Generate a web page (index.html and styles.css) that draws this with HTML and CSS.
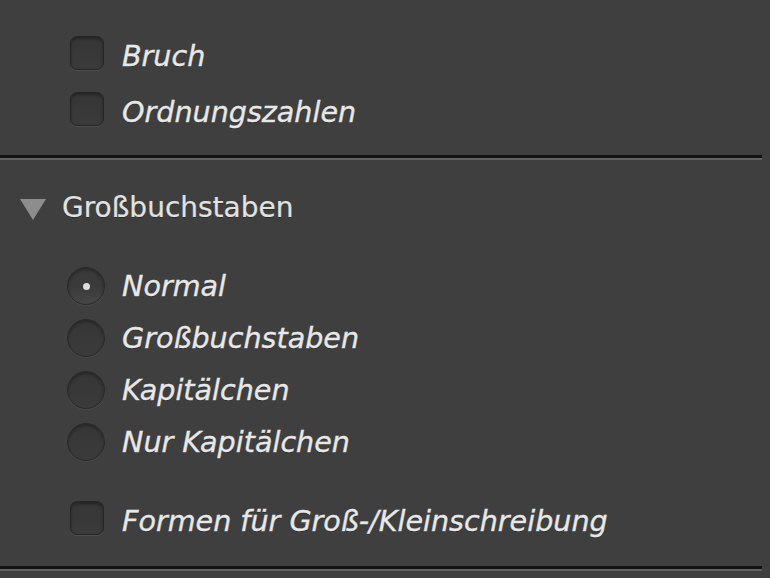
FILE: index.html
```html
<!DOCTYPE html>
<html lang="de">
<head>
<meta charset="utf-8">
<title>Großbuchstaben</title>
<link rel="stylesheet" href="styles.css">
</head>
<body>
<div class="panel">
  <div class="group group-top">
    <label class="row check-row"><span class="checkbox"></span><span class="label">Bruch</span></label>
    <label class="row check-row"><span class="checkbox"></span><span class="label">Ordnungszahlen</span></label>
  </div>
  <div class="separator sep-1"></div>
  <div class="section-head">
    <svg class="disclosure" width="26" height="21" viewBox="0 0 26 21"><polygon points="0,0 26,0 13,21" fill="#8d8d8d"/></svg>
    <span class="head-text">Großbuchstaben</span>
  </div>
  <div class="group group-radios">
    <label class="row radio-row"><span class="radio selected"><span class="dot"></span></span><span class="label">Normal</span></label>
    <label class="row radio-row"><span class="radio"></span><span class="label">Großbuchstaben</span></label>
    <label class="row radio-row"><span class="radio"></span><span class="label">Kapitälchen</span></label>
    <label class="row radio-row"><span class="radio"></span><span class="label">Nur Kapitälchen</span></label>
  </div>
  <div class="group group-forms">
    <label class="row check-row"><span class="checkbox"></span><span class="label">Formen für Groß-/Kleinschreibung</span></label>
  </div>
  <div class="separator sep-2"></div>
</div>
</body>
</html>
```
FILE: styles.css
```css
html, body {
  margin: 0;
  padding: 0;
  background: #3f3f3f;
}
body {
  width: 770px;
  height: 578px;
  overflow: hidden;
  font-family: "DejaVu Sans", "Liberation Sans", sans-serif;
  color: #e6e6e6;
}
.panel {
  display: flex;
  flex-direction: column;
}
.group {
  display: flex;
  flex-direction: column;
}
.group-top {
  padding-top: 25px;
}
.row {
  display: flex;
  align-items: center;
}
.check-row {
  height: 56px;
  padding-left: 70px;
}
.radio-row {
  height: 52px;
  padding-left: 67px;
}
.label {
  font-style: italic;
  font-size: 28.6px;
  line-height: 33px;
  color: #e8e8e8;
  -webkit-text-stroke: 0.35px #e8e8e8;
  text-shadow: 0 1px 0 rgba(0,0,0,0.35);
}
.check-row .label {
  margin-left: 18px;
  margin-top: 7px;
}
.radio-row .label {
  margin-left: 17px;
  margin-top: 1px;
}
.checkbox {
  width: 34px;
  height: 34px;
  box-sizing: border-box;
  border: 1px solid #262626;
  border-radius: 7px;
  background: linear-gradient(#363636, #3b3b3b);
  box-shadow: inset 0 2px 3px rgba(0,0,0,0.35), 0 1px 0 rgba(255,255,255,0.08);
  flex: none;
}
.radio {
  width: 38px;
  height: 38px;
  box-sizing: border-box;
  border-radius: 50%;
  border: 1px solid #2a2a2a;
  background: linear-gradient(#363636, #3b3b3b);
  box-shadow: inset 0 2px 3px rgba(0,0,0,0.3), 0 1px 0 rgba(255,255,255,0.06);
  flex: none;
  display: flex;
  align-items: center;
  justify-content: center;
}
.radio.selected {
  background: linear-gradient(#3a3a3a 0%, #3a3a3a 50%, #474747 100%);
}
.dot {
  width: 7px;
  height: 7px;
  border-radius: 50%;
  background: #dedede;
}
.separator {
  width: 762px;
  height: 2px;
  border-top: 3px solid #131313;
  background: #626262;
}
.sep-1 {
  margin-top: 18px;
}
.section-head {
  margin-top: 27px;
  height: 40px;
  display: flex;
  align-items: center;
  padding-left: 20px;
}
.disclosure {
  display: block;
  margin-top: 5px;
  flex: none;
}
.head-text {
  margin-left: 16px;
  font-size: 28px;
  line-height: 33px;
  color: #e2e2e2;
  -webkit-text-stroke: 0.2px #e2e2e2;
  text-shadow: 0 1px 0 rgba(0,0,0,0.35);
}
.group-radios {
  margin-top: 33px;
}
.group-forms {
  margin-top: 22px;
}
.sep-2 {
  margin-top: 20px;
}
```
